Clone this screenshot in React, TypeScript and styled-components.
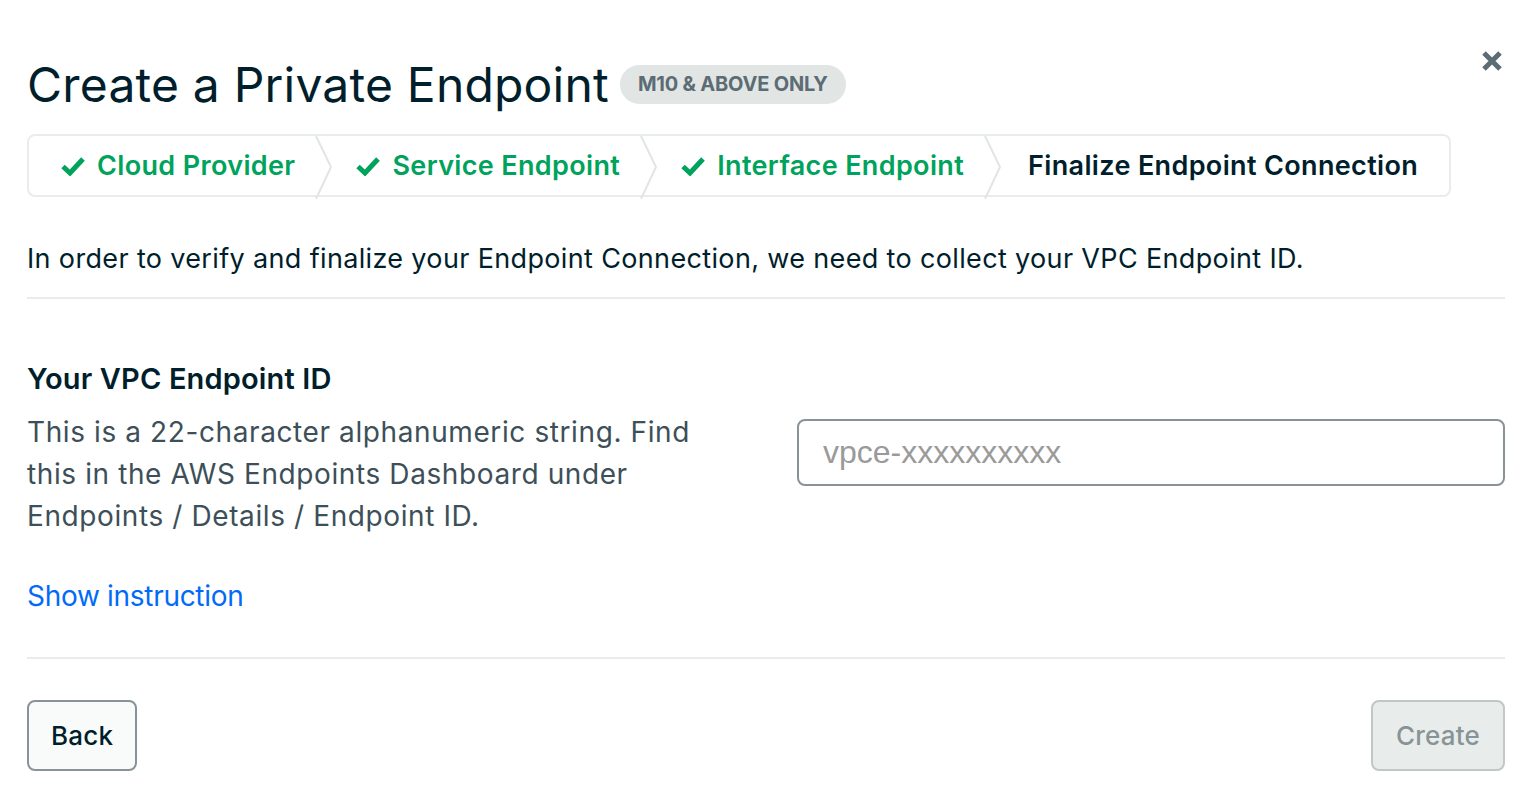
import React from "react";
import styled, { createGlobalStyle } from "styled-components";

const Global = createGlobalStyle`
  html, body { margin: 0; padding: 0; background: #ffffff; }
  body { font-family: Inter, "Noto Sans", sans-serif; color: #001e2b; }
  * { box-sizing: border-box; }
`;

const Page = styled.div`
  padding: 48px 30px 0 27px;
  display: flex;
  flex-direction: column;
  position: relative;
`;

const Header = styled.div`
  display: flex;
  align-items: center;
  gap: 11px;
  height: 72px;
`;

const Title = styled.h1`
  margin: 0;
  font-size: 48px;
  font-weight: 400;
  color: #001e2b;
  letter-spacing: 0.2px;
`;

const Badge = styled.span`
  display: inline-flex;
  align-items: center;
  height: 39px;
  padding: 0 18px;
  border-radius: 20px;
  background: #e1e5e4;
  color: #5c6c75;
  font-size: 20px;
  font-weight: 700;
  letter-spacing: -0.2px;
  text-transform: uppercase;
`;

const Close = styled.button`
  position: absolute;
  top: 48px;
  right: 30px;
  width: 26px;
  height: 26px;
  border: 0;
  padding: 0;
  background: transparent;
  display: flex;
  align-items: center;
  justify-content: center;
`;

const Stepper = styled.div`
  margin-top: 14px;
  align-self: flex-start;
  display: flex;
  align-items: stretch;
  height: 63px;
  width: 1424px;
  border: 2px solid #e8edeb;
  border-radius: 8px;
`;

const Step = styled.div<{ $done?: boolean; $first?: boolean; $last?: boolean }>`
  display: flex;
  align-items: center;
  gap: 12px;
  padding: 0 20px 0 ${(p) => (p.$first ? "32px" : p.$last ? "26px" : "23px")};
  font-size: 27px;
  font-weight: 600;
  letter-spacing: 0.35px;
  color: ${(p) => (p.$done ? "#00a35c" : "#001e2b")};
  white-space: nowrap;
`;

const Sep = styled.svg`
  flex: none;
  display: block;
`;

const Intro = styled.p`
  margin: 44px 0 0;
  font-size: 27px;
  letter-spacing: 0.35px;
  line-height: 36px;
  color: #001e2b;
`;

const Divider = styled.hr<{ $top?: number }>`
  margin: ${(p) => p.$top ?? 20}px 0 0;
  border: 0;
  border-top: 2px solid #e8edeb;
`;

const Section = styled.div`
  display: grid;
  grid-template-columns: 770px 1fr;
  margin-top: 62px;
`;

const Label = styled.div`
  font-size: 29px;
  font-weight: 600;
  letter-spacing: 0.15px;
  color: #001e2b;
  line-height: 36px;
`;

const Help = styled.p`
  margin: 14px 0 0;
  font-size: 28px;
  letter-spacing: 0.6px;
  line-height: 42px;
  color: #3d4f58;
  width: 700px;
`;

const Link = styled.a`
  display: inline-block;
  margin-top: 42px;
  font-size: 28px;
  letter-spacing: -0.3px;
  color: #016bf8;
  text-decoration: none;
`;

const Input = styled.input`
  margin-top: 58px;
  width: 100%;
  height: 67px;
  border: 2px solid #889397;
  border-radius: 8px;
  padding: 0 24px;
  font-family: "Liberation Sans", Arial, sans-serif;
  font-size: 32px;
  color: #001e2b;
  outline: none;
  &::placeholder { color: #9a9a9a; }
`;

const Footer = styled.div`
  display: flex;
  justify-content: space-between;
  margin-top: 41px;
`;

const Button = styled.button<{ $disabled?: boolean }>`
  height: 71px;
  padding: 0 ${(p) => (p.$disabled ? "23px" : "22px")};
  border-radius: 8px;
  font-family: Inter, "Noto Sans", sans-serif;
  font-size: 26px;
  font-weight: 500;
  letter-spacing: 0.2px;
  border: 2px solid ${(p) => (p.$disabled ? "#c1c7c6" : "#889397")};
  background: ${(p) => (p.$disabled ? "#e8edeb" : "#f9fbfa")};
  color: ${(p) => (p.$disabled ? "#889397" : "#001e2b")};
`;

const Check = () => (
  <svg width="24" height="20" viewBox="0 0 24 20">
    <path d="M2 10.5 L9 17 L22 3" fill="none" stroke="#00a35c" strokeWidth="5" />
  </svg>
);

const Chevron = () => (
  <Sep width="18" height="63" viewBox="0 0 18 63">
    <path d="M1 0 L16 31 L1 63" fill="none" stroke="#e1e5e4" strokeWidth="2" />
  </Sep>
);

export default function App() {
  return (
    <>
      <Global />
      <Page>
        <Header>
          <Title>Create a Private Endpoint</Title>
          <Badge>M10 &amp; Above Only</Badge>
        </Header>
        <Close aria-label="close">
          <svg width="22" height="22" viewBox="0 0 22 22">
            <path d="M3 3 L19 19 M19 3 L3 19" stroke="#5c6c75" strokeWidth="5" />
          </svg>
        </Close>
        <Stepper>
          <Step $done $first>
            <Check />
            Cloud Provider
          </Step>
          <Chevron />
          <Step $done>
            <Check />
            Service Endpoint
          </Step>
          <Chevron />
          <Step $done>
            <Check />
            Interface Endpoint
          </Step>
          <Chevron />
          <Step $last>Finalize Endpoint Connection</Step>
        </Stepper>
        <Intro>
          In order to verify and finalize your Endpoint Connection, we need to collect your VPC Endpoint ID.
        </Intro>
        <Divider />
        <Section>
          <div>
            <Label>Your VPC Endpoint ID</Label>
            <Help>
              This is a 22-character alphanumeric string. Find this in the AWS Endpoints Dashboard under
              Endpoints / Details / Endpoint ID.
            </Help>
            <Link href="#">Show instruction</Link>
          </div>
          <div>
            <Input placeholder="vpce-xxxxxxxxxx" />
          </div>
        </Section>
        <Divider $top={44} />
        <Footer>
          <Button>Back</Button>
          <Button $disabled>Create</Button>
        </Footer>
      </Page>
    </>
  );
}
